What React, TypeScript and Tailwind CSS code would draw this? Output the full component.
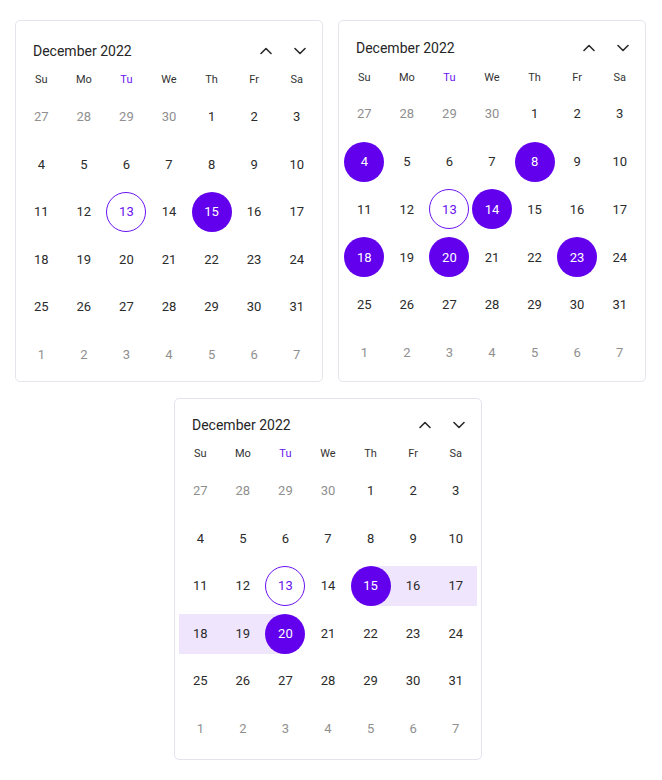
import React from "react";

type Cell = { d: number; other: boolean };

const weeks: Cell[][] = (() => {
  const all: Cell[] = [];
  [27, 28, 29, 30].forEach((d) => all.push({ d, other: true }));
  for (let d = 1; d <= 31; d++) all.push({ d, other: false });
  for (let d = 1; d <= 7; d++) all.push({ d, other: true });
  const rows: Cell[][] = [];
  for (let i = 0; i < 6; i++) rows.push(all.slice(i * 7, i * 7 + 7));
  return rows;
})();

const dayNames = ["Su", "Mo", "Tu", "We", "Th", "Fr", "Sa"];

type Band = "none" | "full" | "right" | "left";

function Chevron({ up }: { up: boolean }) {
  return (
    <div className="w-5 h-5 flex items-center justify-center">
      <svg width="12" height="8" viewBox="0 0 12 8" fill="none">
        <path
          d={up ? "M1 6.5 L6 1.5 L11 6.5" : "M1 1.5 L6 6.5 L11 1.5"}
          stroke="#2b2b2b"
          strokeWidth="1.6"
          strokeLinecap="round"
          strokeLinejoin="round"
        />
      </svg>
    </div>
  );
}

function Calendar({
  selected,
  rangeStart,
  rangeEnd,
  pt,
  dayMt,
  gridMt,
  rowH,
}: {
  selected: number[];
  rangeStart?: number;
  rangeEnd?: number;
  pt: string;
  dayMt: string;
  gridMt: string;
  rowH: string;
}) {
  const bandFor = (c: Cell): Band => {
    if (c.other || rangeStart === undefined || rangeEnd === undefined) return "none";
    if (c.d === rangeStart) return "right";
    if (c.d === rangeEnd) return "left";
    if (c.d > rangeStart && c.d < rangeEnd) return "full";
    return "none";
  };
  return (
    <div
      className={`w-[308px] h-[362px] rounded-[5px] border border-[#e2e5ec] bg-white flex flex-col ${pt}`}
    >
      <div className="h-[36px] flex items-center pl-[17px] pr-[12px]">
        <div className="flex-1 text-[14px] text-[#262626]">December 2022</div>
        <div className="flex items-center gap-[14px]">
          <Chevron up />
          <Chevron up={false} />
        </div>
      </div>
      <div className={`px-1 grid grid-cols-7 h-[22px] items-center ${dayMt}`}>
        {dayNames.map((n) => (
          <div
            key={n}
            className={`text-center text-[11px] ${n === "Tu" ? "text-[#6a12f0]" : "text-[#333333]"}`}
          >
            {n}
          </div>
        ))}
      </div>
      <div className={`px-1 flex flex-col ${gridMt}`}>
        {weeks.map((row, ri) => (
          <div key={ri} className={`grid grid-cols-7 ${rowH}`}>
            {row.map((c, ci) => {
              const band = bandFor(c);
              const isSel = !c.other && selected.includes(c.d);
              const isToday = !c.other && c.d === 13;
              const bandCls =
                band === "full"
                  ? "bg-[#efe6fd]"
                  : band === "right"
                  ? "bg-[linear-gradient(to_right,transparent_50%,#efe6fd_50%)]"
                  : band === "left"
                  ? "bg-[linear-gradient(to_right,#efe6fd_50%,transparent_50%)]"
                  : "";
              const circleCls = isSel
                ? "bg-[#6200ee] text-white"
                : isToday
                ? "border border-[#6a12f0] text-[#6a12f0]"
                : c.other
                ? "text-[#8f8f8f]"
                : "text-[#2b2b2b]";
              return (
                <div key={ci} className="flex items-center">
                  <div className={`w-full h-10 flex items-center justify-center ${bandCls}`}>
                    <div
                      className={`w-10 h-10 rounded-full flex items-center justify-center text-[13px] ${circleCls}`}
                    >
                      {c.d}
                    </div>
                  </div>
                </div>
              );
            })}
          </div>
        ))}
      </div>
    </div>
  );
}

export default function App() {
  return (
    <div
      className="w-[662px] min-h-[780px] bg-white pt-5"
      style={{ fontFamily: "Roboto, 'Liberation Sans', sans-serif" }}
    >
      <div className="flex gap-[15px] pl-[15px]">
        <Calendar selected={[15]} pt="pt-[12px]" dayMt="mt-0" gridMt="mt-[2px]" rowH="h-[47.6px]" />
        <Calendar
          selected={[4, 8, 14, 18, 20, 23]}
          pt="pt-[9px]"
          dayMt="mt-[1px]"
          gridMt="mt-[1px]"
          rowH="h-[47.8px]"
        />
      </div>
      <div className="flex pl-[174px] mt-4">
        <Calendar
          selected={[15, 20]}
          rangeStart={15}
          rangeEnd={20}
          pt="pt-[8px]"
          dayMt="mt-0"
          gridMt="mt-[2px]"
          rowH="h-[47.6px]"
        />
      </div>
    </div>
  );
}
